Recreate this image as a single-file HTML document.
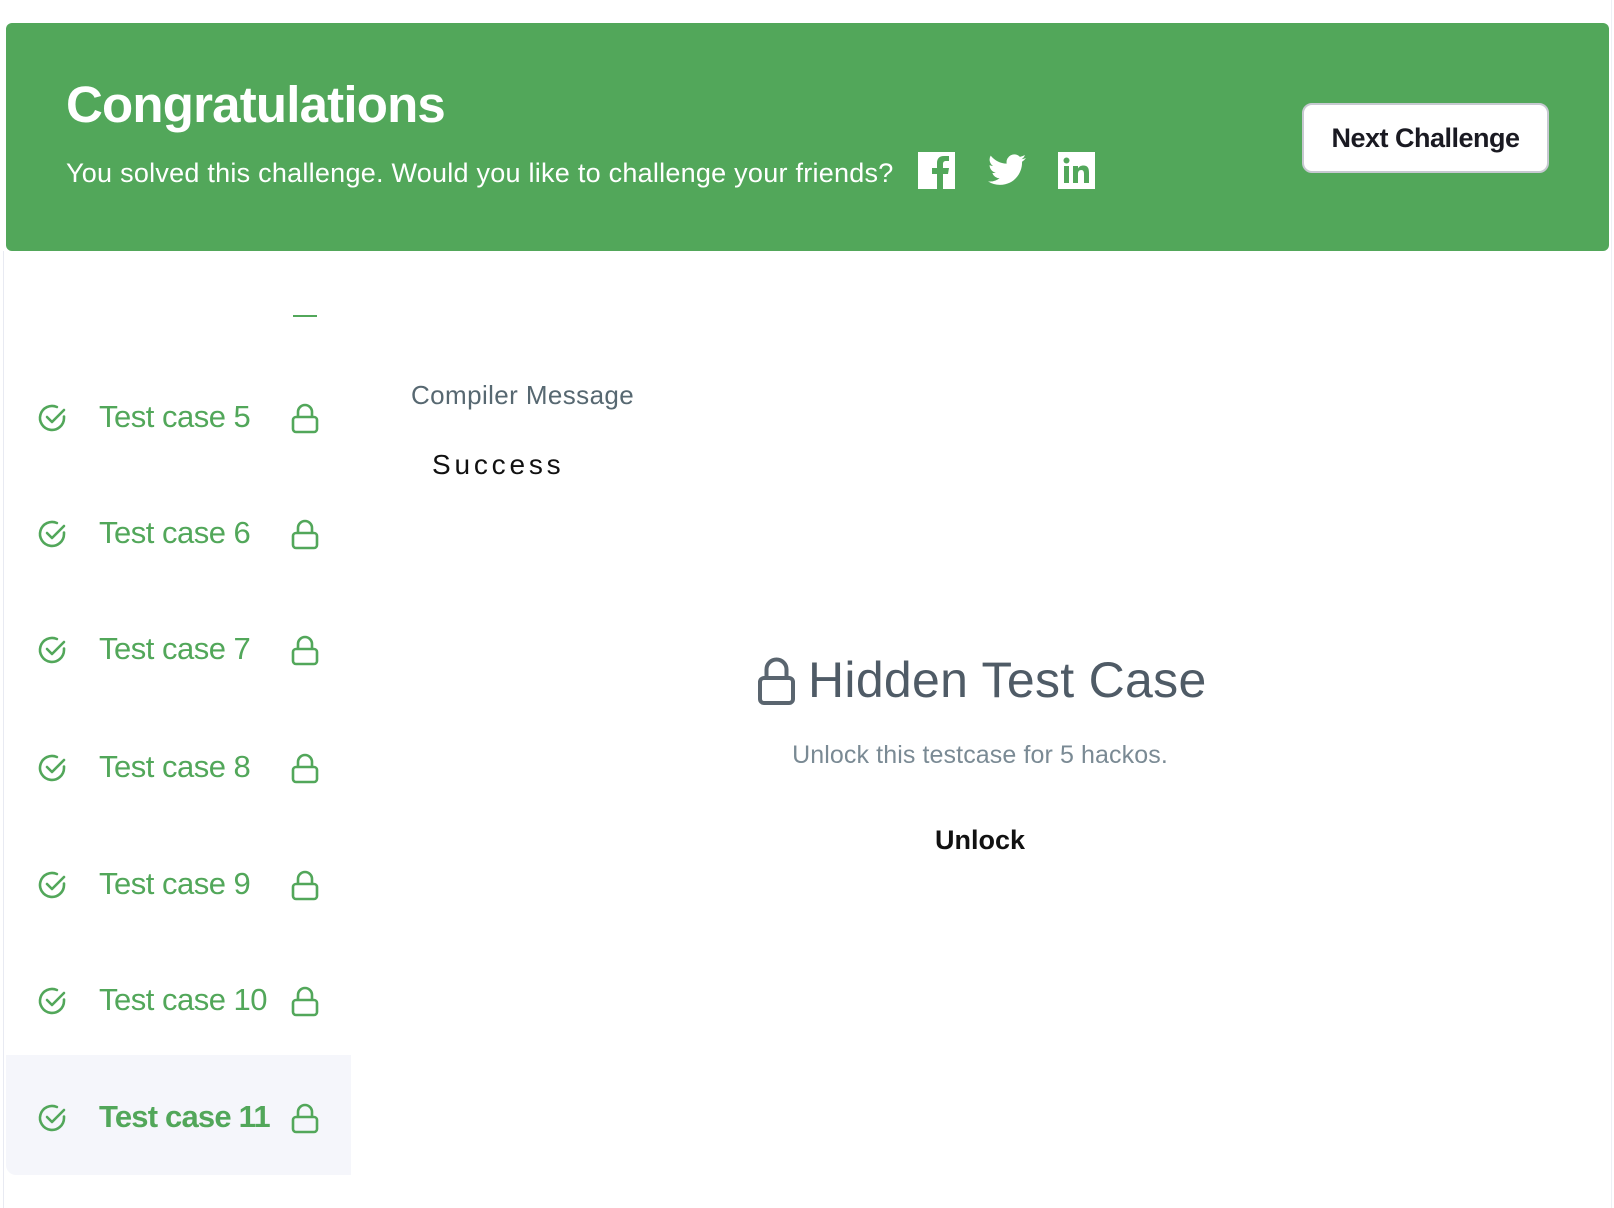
<!DOCTYPE html>
<html><head><meta charset="utf-8"><style>
*{margin:0;padding:0;box-sizing:border-box}
body{width:1614px;height:1208px;background:#fff;font-family:"Liberation Sans",sans-serif;position:relative;overflow:hidden}
.a{position:absolute;white-space:nowrap}
.banner{left:6px;top:23px;width:1603px;height:228px;background:#52a75a;border-radius:6px}
.tc{left:99px;font-size:31px;color:#52a75a;line-height:36px;letter-spacing:-0.5px}
.chk{left:36px}
.lk{left:291px}
</style></head><body>
<div class="a" style="left:3px;top:251px;width:1px;height:957px;background:#e8eaf2"></div>
<div class="a" style="left:1611px;top:0;width:1px;height:1208px;background:#eef0f5"></div>
<div class="a banner"></div>
<div class="a" style="left:66px;top:75px;font-size:51px;font-weight:bold;color:#fff;line-height:60px;letter-spacing:-0.8px">Congratulations</div>
<div class="a" style="left:66px;top:157px;font-size:27px;color:#fff;line-height:32px;letter-spacing:0.25px">You solved this challenge. Would you like to challenge your friends?</div>
<svg class="a" style="left:918px;top:152px" width="37" height="37" viewBox="0 0 37 37"><rect width="37" height="37" fill="#fff"/><path d="M25 37V22h5l1-6h-6v-4c0-2 1-3 3-3h3V4h-5c-5 0-7 3-7 7v5h-5v6h5v15z" fill="#52a75a"/></svg>
<svg class="a" style="left:988px;top:153px" width="38" height="34" viewBox="0 0 24 20"><path fill="#fff" d="M24 2.4a10 10 0 0 1-2.8.8A5 5 0 0 0 23.3.5a10 10 0 0 1-3.1 1.2A4.9 4.9 0 0 0 11.8 6 14 14 0 0 1 1.7.9a4.9 4.9 0 0 0 1.5 6.6A4.9 4.9 0 0 1 1 6.9a4.9 4.9 0 0 0 3.9 4.8 5 5 0 0 1-2.2.1 4.9 4.9 0 0 0 4.6 3.4A9.9 9.9 0 0 1 0 17.2 14 14 0 0 0 7.5 19.4c9.1 0 14-7.5 14-14v-.6A10 10 0 0 0 24 2.4z"/></svg>
<svg class="a" style="left:1058px;top:152px" width="37" height="37" viewBox="0 0 37 37"><rect width="37" height="37" fill="#fff"/><rect x="6" y="14" width="5" height="17" fill="#52a75a"/><circle cx="8.5" cy="8.5" r="3" fill="#52a75a"/><path d="M15 14h5v2.5c1-2 3-3 5.5-3 4 0 5.5 2.5 5.5 7V31h-5v-9c0-2.5-.7-4-2.8-4S20 19.5 20 22v9h-5z" fill="#52a75a"/></svg>
<div class="a" style="left:1302px;top:103px;width:247px;height:70px;background:#fff;border:2px solid #c7c9d1;border-radius:10px;font-size:27px;font-weight:bold;color:#1a1a22;text-align:center;line-height:66px;letter-spacing:-0.5px">Next Challenge</div>

<div class="a" style="left:293px;top:315px;width:24px;height:2px;background:#52a75a"></div>
<div class="a" style="left:6px;top:1055px;width:345px;height:120px;background:#f5f6fb;border-radius:0 0 0 10px"></div>

<div class="a" style="left:411px;top:380px;font-size:26px;color:#576871;letter-spacing:0.4px">Compiler Message</div>
<div class="a" style="left:432px;top:449px;font-size:28px;color:#111;letter-spacing:3.8px">Success</div>

<svg class="a" style="left:758px;top:655px" width="37" height="50" viewBox="0 0 37 50"><path d="M8.5 23V14.5a10 10 0 0 1 20 0V23" fill="none" stroke="#5a656f" stroke-width="4"/><rect x="2" y="23" width="33" height="25" rx="4" fill="none" stroke="#5a656f" stroke-width="4"/></svg>
<div class="a" style="left:808px;top:652px;font-size:50px;color:#4f5b66;line-height:56px;letter-spacing:0.3px">Hidden Test Case</div>
<div class="a" style="left:760px;top:741px;width:440px;text-align:center;font-size:25px;color:#7a8a94;letter-spacing:0.1px">Unlock this testcase for 5 hackos.</div>
<div class="a" style="left:880px;top:825px;width:200px;text-align:center;font-size:27px;font-weight:bold;color:#111">Unlock</div>

<div id="rows"></div>
<script>
var ys=[418,534,650,768,885,1001,1118],h='';
ys.forEach(function(y,i){
var n=i+5,b=(n==11)?'font-weight:bold;letter-spacing:-0.8px;':'';
h+='<svg class="a chk" style="top:'+(y-16)+'px" width="32" height="32" viewBox="0 0 32 32"><path d="M28 14.5V16A12 12 0 1 1 20.9 5" fill="none" stroke="#52a75a" stroke-width="2.6" stroke-linecap="round"/><path d="M11 15l5 5 12-12" fill="none" stroke="#52a75a" stroke-width="2.6" stroke-linecap="round" stroke-linejoin="round"/></svg>';
h+='<div class="a tc" style="top:'+(y-19)+'px;'+b+'">Test case '+n+'</div>';
h+='<svg class="a lk" style="top:'+(y-15)+'px" width="28" height="31" viewBox="0 0 28 31"><path d="M7 14V9a7 7 0 0 1 14 0v5" fill="none" stroke="#52a75a" stroke-width="2.6"/><rect x="2" y="14" width="24" height="15" rx="3" fill="none" stroke="#52a75a" stroke-width="2.6"/></svg>';
});
document.getElementById('rows').innerHTML=h;
</script>
</body></html>
